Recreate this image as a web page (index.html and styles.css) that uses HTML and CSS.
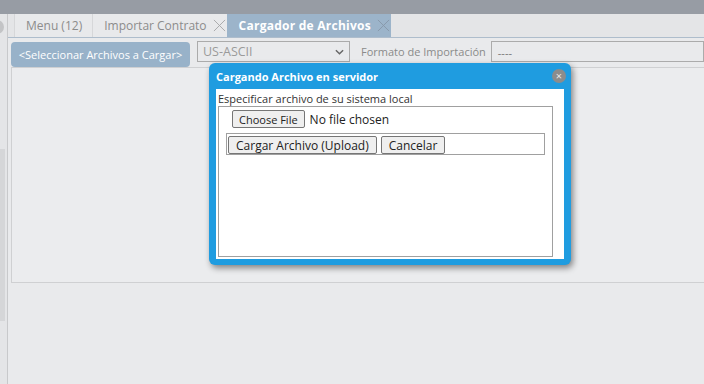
FILE: index.html
```html
<!DOCTYPE html>
<html lang="es">
<head>
    <meta charset="UTF-8">
    <title>Cargador de Archivos</title>
    <link rel="stylesheet" href="styles.css">
</head>
<body>
<div class="topbar"></div>
<div class="app">
    <div class="side">
        <div class="side-knob"></div>
        <div class="side-thumb"></div>
    </div>
    <div class="main">
        <div class="tabs">
            <div class="tab">Menu (12)</div>
            <div class="tab">Importar Contrato
                <svg class="tab-x" viewBox="0 0 14 14"><path d="M1 1L13 13M13 1L1 13"/></svg>
            </div>
            <div class="tab active">Cargador de Archivos
                <svg class="tab-x" viewBox="0 0 14 14"><path d="M1 1L13 13M13 1L1 13"/></svg>
            </div>
        </div>
        <div class="toolbar">
            <button class="pick-btn">&lt;Seleccionar Archivos a Cargar&gt;</button>
            <div class="select">
                <span>US-ASCII</span>
                <svg class="chev" viewBox="0 0 10 6"><path d="M1 1L5 5L9 1"/></svg>
            </div>
            <label class="fmt-label">Formato de Importación</label>
            <div class="fmt-input">----</div>
        </div>
        <div class="panel"></div>
    </div>
</div>

<!-- ventana de carga -->
<div class="dialog">
    <div class="dialog-title">
        <span>Cargando Archivo en servidor</span>
        <span class="dialog-close">×</span>
    </div>
    <div class="dialog-body">
        <p class="hint">Especificar archivo de su sistema local</p>
        <div class="upload-box">
            <input type="file" class="file-input">
            <div class="actions">
                <button class="btn">Cargar Archivo (Upload)</button>
                <button class="btn">Cancelar</button>
            </div>
        </div>
    </div>
</div>
</body>
</html>
```

FILE: styles.css
```css
body {
    margin: 0;
    font-family: "Open Sans", Arial, sans-serif;
    background-color: #e9eaec;
    height: 384px;
    overflow: hidden;
}
.topbar {
    height: 14px;
    background-color: #979ca4;
}
.app {
    display: flex;
    height: 370px;
}
.side {
    width: 7px;
    background-color: #e4e5e7;
    border-right: 1px solid #c8c9cb;
    overflow: hidden;
    flex-shrink: 0;
}
.side-knob {
    width: 14px;
    height: 14px;
    margin: 6px 0 0 -10px;
    border-radius: 50%;
    background-color: #c3c4c6;
}
.side-thumb {
    width: 5px;
    height: 172px;
    margin-top: 115px;
    background-color: #d5d6d8;
}
.main {
    flex: 1;
    min-width: 0;
}
.tabs {
    display: flex;
    height: 23px;
    padding-left: 6px;
    border-bottom: 1px solid #aebdcc;
    background-color: #e4e5e7;
}
.tab {
    display: flex;
    align-items: center;
    padding: 0 10px 0 11px;
    font-size: 12px;
    color: #8c8c8c;
    background-color: #e8e9eb;
    border-left: 1px solid #d6d7d9;
}
.tab .tab-x {
    width: 13px;
    height: 13px;
    margin: 0 -9px 0 6px;
    stroke: #a5a6a8;
    stroke-width: 1;
    fill: none;
}
.tab.active {
    background-color: #9cb4ca;
    color: #fff;
    font-weight: bold;
    letter-spacing: 0.25px;
    border-left: none;
    padding-left: 12px;
}
.tab.active .tab-x {
    stroke: #8797aa;
}
.toolbar {
    display: flex;
    align-items: flex-start;
    height: 29px;
    padding-left: 3px;
}
.pick-btn {
    margin-top: 4px;
    height: 25px;
    width: 179px;
    padding: 0;
    border: none;
    border-radius: 4px;
    background-color: #98b2c9;
    color: #fff;
    font-family: inherit;
    font-size: 11px;
}
.select {
    display: flex;
    align-items: center;
    justify-content: space-between;
    box-sizing: border-box;
    width: 153px;
    height: 21px;
    margin: 3px 0 0 7px;
    padding: 0 5px 0 5px;
    border: 1px solid #ababab;
    font-size: 12.5px;
    color: #9a9a9a;
}
.select .chev {
    width: 9px;
    height: 6px;
    stroke: #666;
    stroke-width: 1.6;
    fill: none;
}
.fmt-label {
    margin: 6px 0 0 11px;
    font-size: 11px;
    color: #8a8a8a;
}
.fmt-input {
    flex: 1;
    box-sizing: border-box;
    height: 21px;
    margin: 3px 0 0 5px;
    padding: 3px 6px;
    border: 1px solid #ababab;
    font-size: 11px;
    color: #777;
}
.panel {
    height: 214px;
    margin-left: 3px;
    border: 1px solid #cfd0d2;
    border-right: none;
    background-color: #ebecee;
}
.dialog {
    position: absolute;
    left: 209px;
    top: 63px;
    width: 362px;
    height: 202px;
    box-sizing: border-box;
    padding: 0 7px 6px 7px;
    display: flex;
    flex-direction: column;
    background-color: #1f9ce0;
    border-radius: 6px;
    box-shadow: 2px 3px 6px rgba(0, 0, 0, 0.45);
}
.dialog-title {
    display: flex;
    align-items: center;
    justify-content: space-between;
    height: 26px;
    color: #fff;
    font-size: 11px;
    font-weight: bold;
}
.dialog-close {
    width: 14px;
    height: 14px;
    margin-right: -2px;
    border-radius: 50%;
    background-color: #8c8c8c;
    color: #e8e8e8;
    font-size: 11px;
    line-height: 13px;
    text-align: center;
    font-weight: normal;
}
.dialog-body {
    flex: 1;
    display: flex;
    flex-direction: column;
    padding: 3px 11px 2px 2px;
    background-color: #fff;
}
.hint {
    margin: 0;
    font-size: 11px;
    line-height: 14px;
    color: #333;
}
.upload-box {
    flex: 1;
    border: 1px solid #a0a0a0;
    padding: 3px 7px 0 7px;
}
.file-input {
    display: block;
    margin-left: 6px;
    font-family: inherit;
    font-size: 12px;
    color: #222;
}
.file-input::file-selector-button {
    height: 18px;
    padding: 0 6px;
    margin-right: 5px;
    border: 1px solid #767676;
    border-radius: 2px;
    background-color: #efefef;
    font-family: inherit;
    font-size: 11px;
    color: #222;
}
.actions {
    display: flex;
    gap: 4px;
    margin-top: 5px;
    height: 22px;
    box-sizing: border-box;
    padding: 2px 1px;
    border: 1px solid #a0a0a0;
}
.btn {
    height: 18px;
    padding: 0 7px;
    border: 1px solid #767676;
    border-radius: 2px;
    background-color: #efefef;
    font-family: inherit;
    font-size: 12px;
    color: #222;
}
```
